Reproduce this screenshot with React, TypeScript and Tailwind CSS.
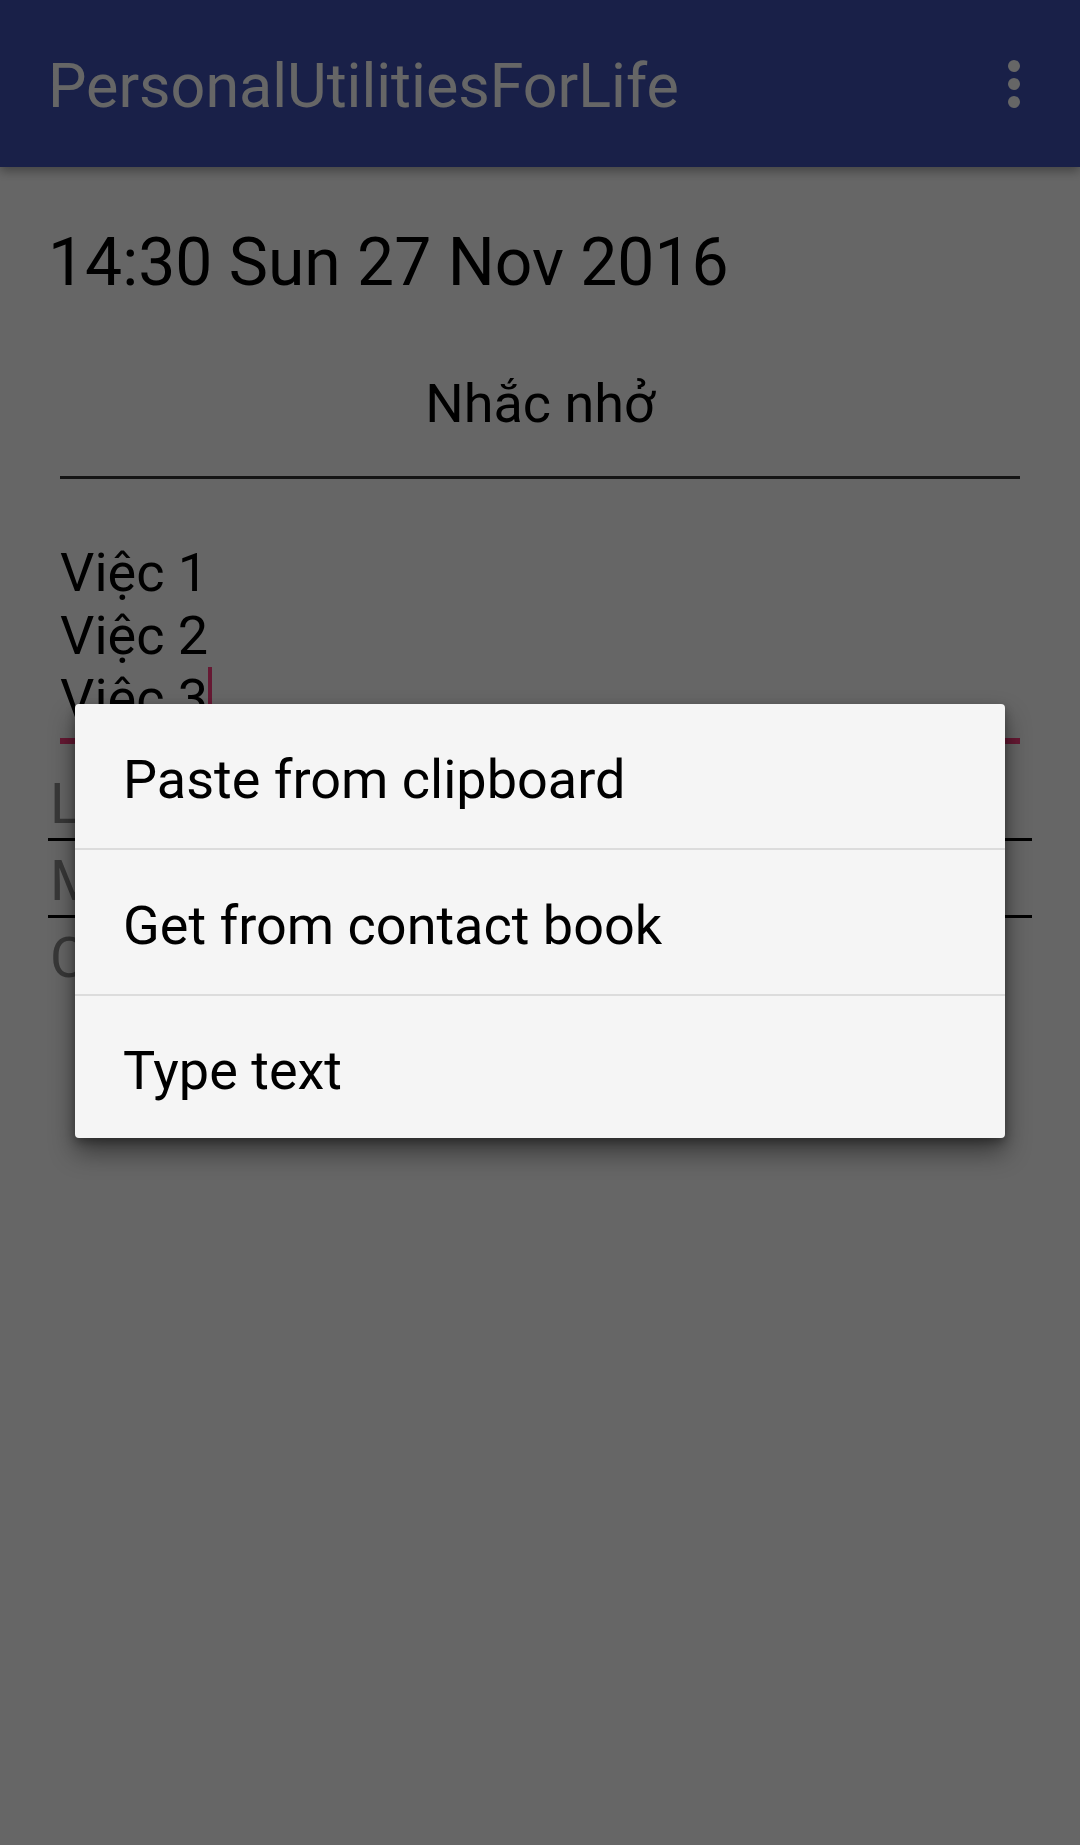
import React from "react";

export default function App() {
  return (
    <div className="relative h-[1845px] w-[1080px] overflow-hidden bg-white font-['Roboto',sans-serif] text-black">
      {/* App bar */}
      <header className="relative z-10 flex h-[167px] items-start justify-between bg-[#3F51B5] pl-[48px] pr-[60px] shadow-[0_4px_10px_rgba(0,0,0,0.35)]">
        <h1 className="mt-[56px] text-[61px] leading-none font-normal text-white">PersonalUtilitiesForLife</h1>
        <div className="mt-[60px] flex flex-col gap-[6px]">
          <span className="block h-[12px] w-[12px] rounded-full bg-white" />
          <span className="block h-[12px] w-[12px] rounded-full bg-white" />
          <span className="block h-[12px] w-[12px] rounded-full bg-white" />
        </div>
      </header>

      {/* Content */}
      <main className="flex flex-col">
        <div className="mt-[63px] pl-[48px] text-[66px] leading-none">14:30 Sun 27 Nov 2016</div>
        <div className="mt-[81px] text-center text-[54px] leading-none">Nhắc nhở</div>
        <div className="mx-[60px] mt-[45px] h-[3px] bg-[#333333]" />
        <div className="mt-[62px] pl-[60px] text-[54px] leading-[63px]">
          <div>Việc 1</div>
          <div>Việc 2</div>
          <div>
            Việc 3<span className="inline-block h-[63px] w-[4px] bg-[#FF4081] align-top" />
          </div>
        </div>
        <div className="mx-[60px] mt-[8px] h-[6px] bg-[#FF4081]" />

        <div className="mt-[32px] flex flex-col gap-[12px] px-[48px]">
          <div className="flex flex-col gap-[6px]">
            <div className="pl-[2px] text-[56px] leading-none text-[#8c8c8c]">Lặp lại</div>
            <div className="h-[3px] bg-black" />
          </div>
          <div className="flex flex-col gap-[6px]">
            <div className="pl-[2px] text-[56px] leading-none text-[#8c8c8c]">Mô tả</div>
            <div className="h-[3px] bg-black" />
          </div>
          <div className="flex flex-col gap-[6px]">
            <div className="pl-[2px] text-[56px] leading-none text-[#8c8c8c]">Chọn giờ</div>
          </div>
        </div>
      </main>

      {/* Scrim */}
      <div className="absolute inset-0 z-20 bg-black/60" />

      {/* Dialog */}
      <div className="absolute left-[75px] top-[704px] z-30 w-[930px] overflow-hidden rounded-[4px] bg-[#f5f5f5] shadow-[0_14px_26px_rgba(0,0,0,0.45),0_4px_10px_rgba(0,0,0,0.3)]">
        <div className="flex h-[144px] items-center pl-[48px] pt-[7px] text-[54px] leading-none">Paste from clipboard</div>
        <div className="h-[2px] bg-[#dcdcdc]" />
        <div className="flex h-[144px] items-center pl-[48px] pt-[7px] text-[54px] leading-none">Get from contact book</div>
        <div className="h-[2px] bg-[#dcdcdc]" />
        <div className="flex h-[142px] items-center pl-[48px] pt-[7px] text-[54px] leading-none">Type text</div>
      </div>
    </div>
  );
}
